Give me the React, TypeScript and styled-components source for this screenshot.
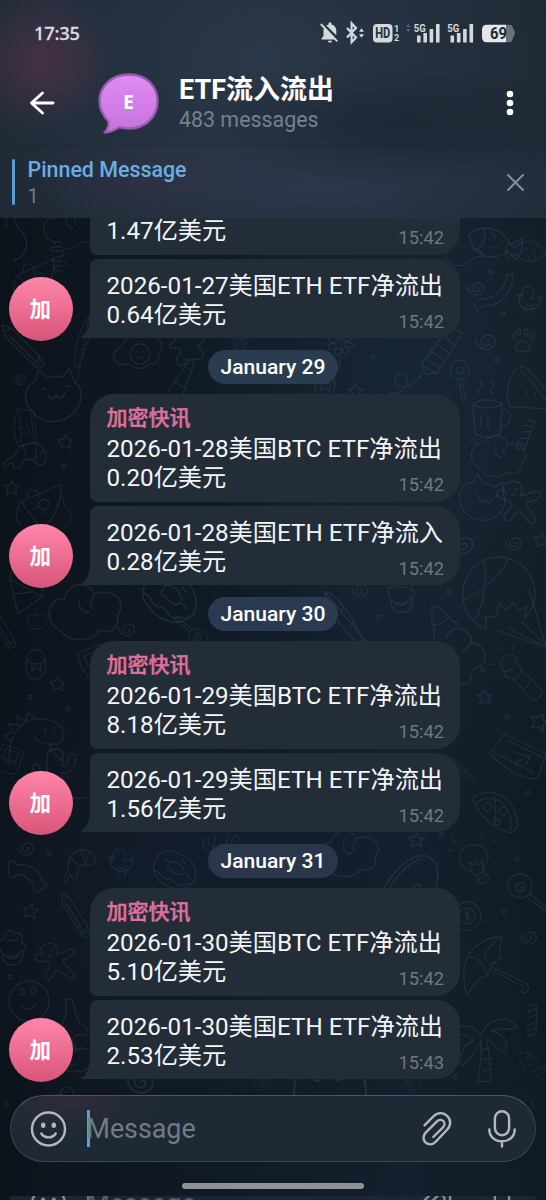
import React from "react";
import styled, { createGlobalStyle, css } from "styled-components";

const GlobalStyle = createGlobalStyle`
  * { box-sizing: border-box; }
  html, body { margin: 0; padding: 0; background: #101924; }
  body { font-family: Roboto, "Noto Sans CJK SC", sans-serif; -webkit-font-smoothing: antialiased; }
`;

const Screen = styled.div`
  position: relative;
  isolation: isolate;
  display: flex;
  flex-direction: column;
  width: 546px;
  height: 1200px;
  overflow: hidden;
  background:
    radial-gradient(ellipse 260px 420px at 440px 400px, rgba(26, 42, 58, 0.6), rgba(26, 42, 58, 0) 100%),
    radial-gradient(ellipse 300px 260px at 200px 900px, rgba(22, 30, 50, 0.6), rgba(22, 30, 50, 0) 100%),
    linear-gradient(90deg, #0d131b 0%, #101a25 40%, #13202d 75%, #101a22 100%);
`;

const Wallpaper = styled.svg`
  position: absolute;
  inset: 0;
  z-index: -1;
  fill: none;
  stroke: rgba(112, 146, 176, 0.14);
  stroke-width: 1.3;
  stroke-linecap: round;
  stroke-linejoin: round;
`;

const Header = styled.header`
  flex: none;
  height: 218px;
  background:
    radial-gradient(ellipse 75px 72px at 42px 60px, rgba(92, 50, 76, 0.62), rgba(92, 50, 76, 0) 100%),
    radial-gradient(ellipse 120px 50px at 150px 178px, rgba(62, 50, 72, 0.35), rgba(62, 50, 72, 0) 100%),
    radial-gradient(ellipse 190px 60px at 400px 125px, rgba(28, 37, 50, 0.8), rgba(28, 37, 50, 0) 100%),
    radial-gradient(ellipse 300px 230px at 260px 60px, rgba(44, 60, 77, 0.75), rgba(44, 60, 77, 0) 100%),
    radial-gradient(ellipse 290px 80px at 330px 190px, rgba(42, 57, 76, 0.75), rgba(42, 57, 76, 0) 100%),
    #202a37;
`;

const StatusBar = styled.div`
  display: flex;
  align-items: center;
  height: 66px;
  padding: 0 30px 0 34px;
`;

const Clock = styled.span`
  flex: 1;
  font: 500 18.3px/24px "Noto Sans", Roboto, sans-serif;
  letter-spacing: -0.2px;
  color: #dedbe3;
  -webkit-text-stroke: 0.3px #dedbe3;
`;

const StatusIcons = styled.svg`
  flex: none;
  display: block;
  fill: #d6d9dc;
`;

const TitleBar = styled.div`
  display: flex;
  align-items: center;
  height: 80px;
  padding: 0 20px 6px 28px;
  border-bottom: 1px solid rgba(20, 28, 38, 0.35);
`;

const BubbleAvatar = styled.svg`
  flex: none;
  margin: 0 19px 0 42px;
`;

const TitleText = styled.div`
  flex: 1;
  padding-top: 3px;
`;

const Title = styled.h1`
  margin: 0;
  font-size: 27px;
  line-height: 30px;
  font-weight: 700;
  color: #fff;
`;

const Subtitle = styled.div`
  margin-top: 2px;
  font-size: 21.4px;
  line-height: 26px;
  color: #75818d;
`;

const Pinned = styled.div`
  display: flex;
  align-items: center;
  height: 72px;
  padding: 0 21px 0 12px;
`;

const PinnedMark = styled.i`
  width: 3px;
  height: 46px;
  border-radius: 2px;
  background: #5a9bd3;
`;

const PinnedText = styled.div`
  flex: 1;
  padding: 2px 0 0 12.5px;
  font-size: 22px;
  line-height: 27px;
  color: #6d7883;
  strong { display: block; font-weight: 500; font-size: 21.4px; color: #69aee3; }
  span { display: block; font-size: 20px; }
`;

const Chat = styled.main`
  flex: none;
  display: flex;
  flex-direction: column;
  justify-content: flex-end;
  height: 864px;
  padding: 0 0 3px 9px;
  overflow: hidden;
`;

const Group = styled.section`
  flex: none;
  display: flex;
  align-items: flex-end;
`;

const Avatar = styled.div`
  flex: none;
  display: flex;
  align-items: center;
  justify-content: center;
  width: 64px;
  height: 64px;
  margin: 0 16.5px -3px 0;
  padding: 0 1.5px 3px 0;
  border-radius: 50%;
  background: linear-gradient(#ff86a9, #d8557a);
  color: #fff;
  font-size: 21.5px;
  font-weight: 700;
`;

const Stack = styled.div`
  display: flex;
  flex-direction: column;
  gap: 3.5px;
  width: 370.5px;
`;

const Bubble = styled.article<{ $last?: boolean }>`
  position: relative;
  height: ${(p) => (p.$last ? "79.5" : "108")}px;
  padding: ${(p) => (p.$last ? "13px" : "9.5px")} 16px 0 17px;
  background: #222d38;
  border-radius: ${(p) => (p.$last ? "7px 24px 24px 0" : "24px 24px 24px 7px")};
`;

const Tail = styled.svg`
  position: absolute;
  left: -8.5px;
  bottom: 0;
  fill: #222d38;
`;

const Sender = styled.div`
  height: 31px;
  font-size: 21px;
  line-height: 29px;
  font-weight: 500;
  color: #e0709b;
  -webkit-text-stroke: 0.4px #e0709b;
`;

const Line = styled.div`
  height: 29px;
  font-size: 24.2px;
  line-height: 29px;
  white-space: nowrap;
  color: #f4f6f8;
`;

const Row = styled.div`
  display: flex;
  justify-content: space-between;
  align-items: flex-start;
`;

const Time = styled.time`
  padding-top: 6px;
  font-size: 18.3px;
  line-height: 29px;
  color: #6d7883;
`;

const DatePill = styled.div<{ $tone?: string }>`
  flex: none;
  align-self: center;
  width: 130px;
  height: 34px;
  margin: 12px 9px 10px 0;
  border-radius: 17px;
  background: ${(p) => p.$tone || "#2a3b4e"};
  color: #fff;
  font-size: 21.1px;
  line-height: 34px;
  font-weight: 500;
  text-align: center;
  white-space: nowrap;
`;

const composerBox = css`
  display: flex;
  align-items: center;
  width: 526px;
  height: 67px;
  padding: 0 16px 0 19px;
`;

const Composer = styled.div`
  ${composerBox}
  flex: none;
  margin: 13px 0 0 10px;
  border-radius: 34px;
  border: 1px solid rgba(120, 135, 150, 0.3);
  border-top-color: rgba(130, 140, 155, 0.45);
  background:
    radial-gradient(ellipse 90px 30px at 60px 6px, rgba(62, 44, 60, 0.5), rgba(62, 44, 60, 0)),
    #1f2935;
`;

const Echo = styled.div`
  flex: none;
  width: 526px;
  height: 4px;
  margin: 7px 0 0 10px;
  overflow: hidden;
  background: #1c2535;
`;

const EchoInner = styled.div`
  ${composerBox}
  margin-top: -26px;
  border: 1px solid transparent;
  opacity: 0.7;
`;

const Caret = styled.i`
  width: 3px;
  height: 37px;
  margin: 0 -3px 0 18.5px;
  background: #5a9fdb;
`;

const Placeholder = styled.div`
  flex: 1;
  font-size: 26.8px;
  line-height: 36px;
  color: #6f7c88;
`;

const Glyph = styled.svg`
  flex: none;
  fill: none;
  stroke: #b2b8be;
  stroke-width: 2.4;
  stroke-linecap: round;
  stroke-linejoin: round;
`;

const BackArrow = styled(Glyph)`
  stroke: #fff;
  stroke-width: 2.9;
`;

const CloseIcon = styled(Glyph)`
  stroke: #82909c;
  stroke-width: 2;
`;

const Mic = styled(Glyph)`
  margin-left: 31.5px;
`;

const HomeBar = styled.div`
  flex: none;
  align-self: center;
  width: 182px;
  height: 6.5px;
  margin-top: 20.5px;
  border-radius: 4px;
  background: #8f9298;
`;

const shapes: Record<string, string> = {
  spiral: "M0 1c2-2 4 1 2 3s-7 0-6-4 9-6 11-1-3 10-8 9-8-6-7-9",
  star: "M0-7l2 5 5 0-4 4 2 5-5-3-5 3 1-5-4-4 5-1z",
  dot: "M-2 0a2 2 0 1 0 4 0a2 2 0 1 0-4 0",
  duck: "M-7-6a6 6 0 1 1 9 4c4 2 8 0 9-2 2 8-3 13-10 13s-12-4-11-9 4-5 4-5zM-7-6l-5 1 4 3M-3 4c1 3 6 3 8 0M-3 9v5M4 9v5M-2-8h.5",
  paw: "M-7 7c-1-5 4-9 8-8s7 6 5 9-5 0-7 1-5 2-6-2zM-9-3a2 3 0 1 1 .1 0M-4-7a2 3 0 1 1 .1 0M3-7a2 3 0 1 1 .1 0M9-3a2 3 0 1 1 .1 0",
  pencil: "M-22-14l6-5L18 9l-6 9L-20-9zM-22-14l-3-7 9 2M12 18c5 3 12-5 6-9M8 14c4 1 8-5 6-8M-17-11L11 12",
  egg: "M-22 8c-8-8 3-12 7-19s14-9 21-7 14-1 17 7-3 10-3 16-8 4-12 7-8 4-14 0-11 1-16-4zM-8 0a10 10 0 1 1 20 0a10 10 0 1 1-20 0M-2 2c2 4 6 3 7 0M-1-3v1M5-3v1",
  cat: "M-18 16c-10-10-8-23 2-27l2-9 8 6c5-1 9-1 12 0l6-7 4 10c9 8 7 20-2 28s-24 8-32-1zM-6 0c2 6 6 4 7 1 2 3 6 3 7-2M-11-5l3 1M10-6l3-1",
  splat: "M-14-8c-6-8 5-12 8-5s7-6 14-2 1 9-2 11 9 6 3 11-9-2-12 3-11 5-11-1 5-5 4-9-9 0-10-3 3-5 6-5z",
  flower: "M-5 0a5 5 0 1 1 10 0a5 5 0 1 1-10 0M-4-5c-6-9 4-13 4-1 2-12 10-8 4 0 9-8 12 1 2 4 12 1 9 9 0 4 6 8-2 13-4 3-3 11-11 6-5-1-9 5-13-3-3-5-11-4-6-12 2-5M0 14c1 9-3 14-8 20",
  rocket: "M-17 15l24-33c5-4 13-3 17 2L-1 23zM-13 9l14 8M-7 1l14 10M-1-6l13 10M6-14l12 11M-17 15l4 9 12-1M-16 24c-9 14-26 17-27 7s13-10 12 0-10 14-18 12",
  ribbon: "M-18 14c2-5 6-6 9-5C0 9 13 2 15-15l6-1C21 3 8 15-5 16c-4-1-7 2-10 5z",
  fish: "M-22-2C-14-14 6-16 17-1l9-8c3 8 2 18-2 20l-8-6C3 20-16 14-22-2zM-10-10c4 6 3 14-1 19M-16-3h1M-2-8l5 4M0 5l6-2",
  mug: "M-15-12c7-6 22-5 29 0l-2 30c-7 5-19 4-25-1zM-15-12c7 5 22 5 29 0M14-6c11-3 12 16-1 16M-8-22c-6-6 6-6 0-14M4-22c-6-6 6-6 0-14M-7 0v11M0 1v13",
  melon: "M-22 20c-6-15-1-37 11-42C0-19 14 3 25 16c-14 10-30 0-47 4zM-11-17C-3-12 7 5 16 15M-14-5l4 3M-7 2l3 5M2 5l1 4",
  pizza: "M-20-17C-3-31 27-18 25 12l-5 6C7 15-10 8-20-17zM-17-11C-3-24 21-15 19 15M-5-4a4 4 0 1 1 .1 0M11 0a4 4 0 1 1 .1 0M5 10a3 3 0 1 1 .1 0M3-18v25",
  slice: "M-19-3L20-21c4 14-5 34-18 45zM-12-6a6 6 0 1 1 10 0M4 4a5 5 0 1 1 .1 0M-7 5c3-6 10-3 10 3M-19-3c-6 9-6 19 0 23",
  cloud: "M-22 17c-15-6-11-28 3-26C-15-25 3-24 6-13c14-7 29 6 19 18 3 8-5 16-15 12-5 10-25 11-32 0zM-6-9c-2 6 2 11 8 11M6-11c-4 3-4 7-1 10",
  acorn: "M-9-6c2-11 16-11 18 0 3 10-1 20-9 21s-12-9-9-21zM-9-4c5 5 14 5 18 0M-4-1v8l4-4 5 4V0",
  apple: "M0-5c-6-7-15 0-12 9 3 9 9 10 13 7 5 3 11-2 12-9 1-9-8-12-13-7zM0-5c-1-5-3-8-5-10M-5 7h4",
  gameboy: "M-16-8l25-11c5 0 7 5 8 10L26 9c-2 8-20 15-26 13-7-6-15-19-16-30zM-9-5L8-13l6 12-17 8zM4 11a3 3 0 1 1 .1 0M14 6a3 3 0 1 1 .1 0",
  dino: "M-30 26c-4-22 9-44 28-44 14-1 27 7 26 17-1 9-9 9-14 8 0 10 7 12 14 17M-29 4l-7-5 9-4-5-8 10 1-1-9 9 5 2-9 7 6M5-8v4M14-9v4M-6 0c4 5 11 8 18 7",
  balloon: "M-36 0a36 36 0 1 1 61 26l3-13-8 5-5-9-8 8-7-6-3 12-10 1 0 12A36 36 0 0 1-36 0zM-24 27C-15 14-12-15-15-33M-36 7C-12-4 4-20 9-34M-4 37l51 17L30-4M9 35l38 19M22 28l26 25",
  flash: "M-20-12c-2-8 7-13 12-10l8 12L23 9c2 6-4 11-9 10L-7 1l-8-2zM-19-7c7 3 13-3 13-13M-7 1c4-1 8-6 7-11M5 9c4-2 5-5 5-8M-23-26l-4-4M-10-28v-5M-28-12l-6 1",
  tree: "M-30-40c9 0 15 9 20 15 5 1 8 3 6 7 11 3 16 10 13 15 12 1 17 12 13 20l-12 7c1 7-4 17-10 14s-7-12-10-18M-30-40v18c6 2 12-2 16-6M-5-17c-6 0-9 4-11 9M9-2L0 6M-28-20v13",
  shrimp: "M-18 18c-1-10 7-10 5-17-1-11 10-21 20-17 9 2 12 12 7 16-5 2-8-3-15 2-4 3 2 7-3 12s-5-5-8-1-3 9-6 5zM1-16l5 13M10-14l-4 12M-10-8l9 9",
  donut: "M-21-6c1-14 16-17 26-11 13 5 19 17 14 27-7 11-23 9-31 2S-22 4-21-6zM-7-5c1-8 11-4 15 2s-2 9-8 5-8-3-7-7zM-20 0c7 1 6 9 13 8s8 9 14 6 10 2 14-6M-10-12l3 2M8-10l3 3M11 3l3 3",
  bone: "M-16-8c-4-8 5-11 7-4 13-2 25 5 26 16 7 1 5 9-1 7-1 7-9 5-7-2-4-8-9-11-17-12-3 6-10 3-8-5z",
  cupcake: "M-13 2c-4-8 2-10 5-10 0-8 7-12 9-6 8-2 10 6 7 9 7 3 4 9 0 9-4 8-19 7-21-2zM-11 7c1 9 5 12 12 11s9-4 9-14M-6 10c5 3 9 1 12-2M-5-8c3 3 8 2 10 0",
  ginger: "M-13-16c9-5 16 2 12 10 8-1 11-7 16-6s3 7-9 11c0 7 13 11 11 17-5 5-13-8-17-7S-4 21-11 18c-4-4 6-11 4-15C-9-2-22 3-22-4s9-1 9-1c-6-4-5-8 0-11zM-12-9h1M-6-11h1M-10-5c2 1 4 0 4-2",
  face: "M-20 0a20 20 0 1 1 40 0a20 20 0 1 1-40 0M-9-9c0-4 4-4 4 0s-4 4-4 0zM2-10c0-4 5-4 5 0s-5 5-5 0zM-7 5c5 5 12 3 14-3",
  cactus: "M-9 27V-22c3-7 14-7 16 0l-1 12c5 1 7-2 6-8 2-6 8-4 8 0-1 12-6 15-14 15v9C6 19 14 24 30 22M-9 4c-11 1-14-3-14-12 1-6 7-4 7 0s2 6 7 5",
  hourglass: "M-22-8L-8-28 34-8 25 17c-15 0-30-8-47-25zM-18-10l39 21M-5-22l39 19M2-10c9 3 10 4 16 4-2 7-4 8-9 10M4 4c0-5 2-6 6-6",
  bulb: "M-9 8c-11-9-4-26 9-24 15 1 17 15 10 20-1 5 2 8 5 12-1 6-9 9-11 4 0-6-6-9-13-12zM-5 1l3 10M-5 1l5 3 2-5 3 5 4-4-1 11M3 14l8-4M5 18l8-4M-22-10l-4-1M-18-19l-3-3M8-23v-4M18-18l3-3",
  lolly: "M-12 0a12 12 0 1 1 24 0a12 12 0 1 1-24 0M9 7l22 18M6 10l23 18M0 1c2-2 3 1 1 3s-6 0-5-4 8-5 9-1-2 8-6 7",
  whale: "M-26 26C-18 8-2-13 14-12c15 4 12 25 5 34M-22 25C-13 10 0-9 12-9M8 18a3 3 0 1 1 .1 0",
  coin: "M-14 0a14 14 0 1 1 28 0a14 14 0 1 1-28 0M-8 0a8 8 0 1 1 16 0a8 8 0 1 1-16 0M2-3c-5-2-5 3-1 3s3 5-2 3M0-5V5",
  umbrella: "M-22 29c-10-35 4-56 35-60-1 8-4 13-1 22-6 3-11 9-13 17-11 3-15 10-21 21zM-20-10c9 0 14 6 19 18M13-31C4-25-3-18-5-8M12-9l-12 7M3 0l35 17c6 8-6 12-6 5M2 3l33 17",
  palm: "M-2-5c-10-13-26-11-31 0 10-3 17-1 24 6-8 2-17 13-12 25 8-6 14-15 19-26 0 16 0 30-4 42l14-1c0-15-2-28-4-42 6 4 10 11 18 14 5-11-3-20-14-22 11-4 20-1 26-3C25-27 5-22-2-5zM-1 10l8-2M0 20l9-2M0 31l9-2",
  candy: "M-4-14l9-2-1 30-8 2 0-8M-4-9l8-2M-4-2l8-3M-4 5l8-3M-4 11l8-3",
  banana: "M-12 22C-12 3 1-7-5-22l7-1c5 15 3 24 16 30l-2 7c-9-4-13 0-15 10l-5-3-8 1",
  cone: "M-15-11L17 7-7 24zM-15-11c0-10 8-15 15-8 10-4 20 8 17 26M-10 4l17-2",
  bottle: "M-18 13L3-17l1-8 8 3-2 8L-4 22zM-8-3l12 8M-18 13l14 9M3-17l7 3",
  bolt: "M-8 20c14-3 15-20 9-27s-9-10-8-18M-6-25c-9 0-12 6-9 13",
  feather: "M-21-29c15 4 33 32 41 55-15-5-34-31-41-55zM-21-29L31 33M-5-5l3-7M5 7l4-7",
  worm: "M-6-22c9-2 10 5 2 5s-8 6 1 4 9 5 1 6-8 5 1 4 8 6 0 5-5 6 2 5",
};

type Doodle = [string, number, number, number?, number?];

const doodles: Doodle[] = [
  ["bolt", 22, 240], ["cloud", 72, 226, 0, 0.9], ["worm", 60, 264], ["slice", 35, 278, 0, 0.9], ["pencil", 25, 348, 5], ["feather", 82, 343, 50, 0.8],
  ["egg", 138, 354], ["splat", 192, 350, 0, 1.1], ["spiral", 20, 378, 0, 0.8], ["cat", 55, 394, 0, 1.2], ["bottle", 182, 384], ["flower", 240, 345, 0, 0.7],
  ["fish", 492, 242, 12, 1.1], ["fish", 528, 252, 180, 0.8], ["bolt", 462, 262, 90, 0.8], ["spiral", 476, 287], ["ribbon", 492, 290], ["duck", 529, 300], ["paw", 523, 342],
  ["spiral", 486, 340, 0, 1.2], ["flower", 340, 344], ["rocket", 438, 350], ["lolly", 460, 370, 40, 0.8], ["melon", 532, 388], ["mug", 488, 416], ["star", 356, 391], ["acorn", 325, 384],
  ["dot", 373, 357], ["dot", 497, 360], ["dot", 503, 314], ["dot", 491, 272],
  ["candy", 525, 435, 20], ["cloud", 500, 455, 10, 0.9], ["spiral", 476, 438, 0, 0.7], ["hourglass", 20, 425, 60, 0.7], ["star", 66, 442], ["shrimp", 28, 458, 30], ["dot", 64, 466],
  ["cat", 484, 498, 20], ["ginger", 520, 502, 10, 1.1], ["spiral", 514, 542], ["spiral", 463, 543, 0, 1.3], ["star", 542, 540], ["balloon", 499, 593], ["spiral", 360, 589], ["cupcake", 402, 594], ["feather", 345, 620],
  ["tree", 462, 646], ["flash", 520, 679, 6], ["star", 485, 697], ["dot", 449, 592], ["dot", 379, 617], ["dot", 483, 669], ["dot", 507, 717], ["star", 540, 722, 20, 1.2],
  ["star", 12, 488], ["slice", 40, 505], ["bolt", 68, 515, 0, 0.7], ["cone", 25, 590], ["cloud", 87, 610, 0, 1.2], ["apple", 37, 620, 0, 0.75], ["donut", 170, 598, 10, 1.3], ["spiral", 127, 628], ["pencil", 4, 630, 20, 0.8],
  ["gameboy", 92, 661, 0, 0.9], ["acorn", 36, 664], ["star", 58, 684], ["dot", 30, 697], ["dot", 68, 709], ["dino", 40, 737], ["lolly", 198, 638, 180, 0.8],
  ["cactus", 56, 776], ["gameboy", 8, 756, 40, 0.7], ["spiral", 26, 847], ["dot", 49, 853], ["shrimp", 80, 865, 0, 0.9], ["duck", 121, 862], ["donut", 175, 871], ["bone", 25, 877], ["pencil", 77, 917, 18, 0.9], ["star", 31, 911, 10],
  ["cupcake", 13, 947], ["ginger", 57, 961], ["face", 29, 1001], ["dot", 10, 977], ["cactus", 220, 850, 12, 0.8],
  ["hourglass", 512, 762], ["pizza", 492, 815], ["feather", 462, 770, -10, 0.5], ["bulb", 474, 861], ["lolly", 520, 886], ["cloud", 350, 852], ["whale", 408, 870, 0, 1.2], ["coin", 467, 916], ["spiral", 529, 936], ["umbrella", 489, 967],
  ["star", 417, 840], ["dot", 441, 835], ["dot", 517, 859], ["dot", 504, 911], ["dot", 528, 793],
  ["palm", 483, 1040], ["candy", 532, 1020], ["fish", 530, 1062, 40, 0.6], ["dot", 455, 1077], ["face", 330, 1092, 0, 1.8], ["whale", 528, 1100, 90, 0.5], ["banana", 70, 1022], ["apple", 76, 1057, 0, 1.2], ["spiral", 141, 1080, 0, 1.6], ["coin", 262, 1082, 0, 0.6], ["duck", 68, 1100], ["dot", 6, 1104], ["splat", 415, 1084, 0, 0.5],
];

function Doodles() {
  return (
    <Wallpaper width="546" height="1200" aria-hidden>
      {doodles.map(([kind, x, y, r = 0, s = 1], i) => (
        <path key={i} d={shapes[kind]} transform={`translate(${x} ${y}) rotate(${r}) scale(${s})`} />
      ))}
    </Wallpaper>
  );
}

const SignalBars = ({ x }: { x: number }) => (
  <g transform={`translate(${x} 0)`}>
    <rect x="3" y="19.500" width="3.600" height="7" rx=".6" />
    <rect x="9.400" y="17" width="3.600" height="9.500" rx=".6" />
    <rect x="15.600" y="13" width="3.600" height="13.500" rx=".6" />
    <rect x="22" y="8" width="3.600" height="18.500" rx=".6" />
    <text x="-.3" y="15.500" fontSize="10.500" fontWeight="700" fontFamily="Roboto" textLength="12" lengthAdjust="spacingAndGlyphs">5G</text>
  </g>
);

function Indicators() {
  return (
    <StatusIcons width="196" height="34" viewBox="0 0 196 34">
      <path d="M1.500 23.500v-1.300l2-2v-5.700c0-1 .3-2 .8-2.900l11.500 11.900zM6.300 9.600c.7-.5 1.500-.8 2.200-1V7.800a1.500 1.500 0 0 1 3 0v.8c3 .7 4.800 3.200 4.800 6v4.700zM8 24.800h4a2 2 0 0 1-4 0z" />
      <path d="M.8 8l16.500 17.300" stroke="#d6d9dc" strokeWidth="1.900" />
      <path d="M27 12l9 9.500-4.400 4.700V7.300L36 12l-9 9.500" fill="none" stroke="#d6d9dc" strokeWidth="2.200" />
      <path d="M39 15.700l2.500-3.500 2.500 3.500zM39 18.200h5l-2.500 3.500z" />
      <rect x="53" y="8" width="19.500" height="18.500" rx="4" />
      <text x="62.700" y="22.400" textAnchor="middle" fontSize="14" fontWeight="800" fontFamily="Roboto" fill="#26323f" textLength="15" lengthAdjust="spacingAndGlyphs">HD</text>
      <text x="74" y="16" fontSize="9" fontWeight="700" fontFamily="Roboto">1</text>
      <text x="74" y="25" fontSize="9" fontWeight="700" fontFamily="Roboto">2</text>
      <path d="M86 11l2.300-3 2.300 3zM86 13h4.600l-2.300 3z" fill="#56616d" />
      <SignalBars x={94} />
      <SignalBars x={127.500} />
      <path d="M186 8.800h4q3 .6 3 4l1.700 2.200v4l-1.700 2.200q0 4-3 5h-4z" fill="#69737e" />
      <path d="M167 8.800h19v17.500h-19q-5 0-5-5v-7.500q0-5 5-5z" fill="#e4e6e8" />
      <text x="178.500" y="23.400" textAnchor="middle" fontSize="16.500" fontWeight="700" fontFamily="Roboto" fill="#202a34" textLength="17" lengthAdjust="spacingAndGlyphs">69</text>
    </StatusIcons>
  );
}

function ComposerContent() {
  return (
    <>
      <Glyph width="38" height="38" viewBox="0 0 38 38">
        <circle cx="18.500" cy="19" r="16.500" />
        <path d="M11.300 23.500c3.200 5.200 11.200 5.200 14.400 0" />
        <g fill="#b2b8be" stroke="none">
          <ellipse cx="13.200" cy="15.300" rx="2.200" ry="2.700" />
          <ellipse cx="23.800" cy="15.300" rx="2.200" ry="2.700" />
        </g>
      </Glyph>
      <Caret />
      <Placeholder>Message</Placeholder>
      <Glyph width="34" height="38" viewBox="0 0 34 38">
        <path d="M4.500 15.300l8.800-8.800c4.500-4.500 10.200-4.300 14-.5s4 9.500-.5 14L15.500 32c-3.300 3.300-7.400 3-10 .4s-2.900-6.700.4-10L17 11.300c2-2 4.800-1.800 6.300-.3s1.700 4.300-.3 6.300L13.300 27" />
      </Glyph>
      <Mic width="34" height="40" viewBox="0 0 34 40">
        <rect x="9.900" y="2.200" width="14.200" height="24" rx="7.100" />
        <path d="M4.300 20.500c0 7.200 5.600 11.800 12.700 11.800s12.700-4.600 12.700-11.800M17 32.300v5.200" />
      </Mic>
    </>
  );
}

type MessageProps = { sender?: string; text: string; amount: string; time: string };

function Message({ sender, text, amount, time }: MessageProps) {
  return (
    <Bubble $last={!sender}>
      {sender && <Sender>{sender}</Sender>}
      <Line>{text}</Line>
      <Row>
        <Line>{amount}</Line>
        <Time>{time}</Time>
      </Row>
      {!sender && (
        <Tail width="9" height="18" viewBox="0 0 9 18">
          <path d="M9 0v18H0.800q-1-.3 0-1.200Q8.500 11 8.500 0z" />
        </Tail>
      )}
    </Bubble>
  );
}

const days = [
  { date: "", sender: "\u00a0", d: "2026-01-27", btc: "1.47", eth: "0.64", dir: "出", time: "15:42", tone: "" },
  { date: "January 29", sender: "加密快讯", d: "2026-01-28", btc: "0.20", eth: "0.28", dir: "入", time: "15:42", tone: "#2a3c4f" },
  { date: "January 30", sender: "加密快讯", d: "2026-01-29", btc: "8.18", eth: "1.56", dir: "出", time: "15:42", tone: "#2a3a50" },
  { date: "January 31", sender: "加密快讯", d: "2026-01-30", btc: "5.10", eth: "2.53", dir: "出", time: "15:43", tone: "#2a374b" },
];

export default function App() {
  return (
    <>
      <GlobalStyle />
      <Screen>
        <Doodles />
        <Header>
          <StatusBar>
            <Clock>17:35</Clock>
            <Indicators />
          </StatusBar>
          <TitleBar>
            <BackArrow width="28" height="28" viewBox="0 0 28 28">
              <path d="M14.500 4L3.500 14l11 10M3.500 14H25" />
            </BackArrow>
            <BubbleAvatar width="62" height="62" viewBox="0 0 62 62">
              <defs>
                <linearGradient id="violet" x1="0" y1="0" x2="0" y2="1">
                  <stop offset="0" stopColor="#e18bf3" />
                  <stop offset="1" stopColor="#c473db" />
                </linearGradient>
              </defs>
              <path
                d="M31 2.500C48 2.500 59.500 14 59.500 29S48 56.500 31 56.500c-3.500 0-6.500-.5-9.500-1.400C17 58 12 60.500 6.500 60.500c3.300-3.300 4.500-7 4-11C5 43.500 1.500 37 1.500 29 1.500 14 14 2.500 31 2.500z"
                fill="url(#violet)"
                stroke="#9a5bb0"
                strokeWidth="2.300"
                strokeLinejoin="round"
              />
              <text x="30.500" y="37" textAnchor="middle" fontSize="19.500" fontWeight="700" fontFamily="Open Sans" fill="#fff">E</text>
            </BubbleAvatar>
            <TitleText>
              <Title>ETF流入流出</Title>
              <Subtitle>483 messages</Subtitle>
            </TitleText>
            <svg width="32" height="28" viewBox="0 0 32 28" fill="#fff">
              <circle cx="16" cy="5" r="3.300" />
              <circle cx="16" cy="14" r="3.300" />
              <circle cx="16" cy="23" r="3.300" />
            </svg>
          </TitleBar>
          <Pinned>
            <PinnedMark />
            <PinnedText>
              <strong>Pinned Message</strong>
              <span>1</span>
            </PinnedText>
            <CloseIcon width="19" height="19" viewBox="0 0 19 19">
              <path d="M2 2l15 15M17 2L2 17" />
            </CloseIcon>
          </Pinned>
        </Header>
        <Chat>
          {days.map((day) => (
            <React.Fragment key={day.d}>
              {day.date && <DatePill $tone={day.tone}>{day.date}</DatePill>}
              <Group>
                <Avatar>加</Avatar>
                <Stack>
                  <Message sender={day.sender} text={`${day.d}美国BTC ETF净流出`} amount={`${day.btc}亿美元`} time="15:42" />
                  <Message text={`${day.d}美国ETH ETF净流${day.dir}`} amount={`${day.eth}亿美元`} time={day.time} />
                </Stack>
              </Group>
            </React.Fragment>
          ))}
        </Chat>
        <Composer>
          <ComposerContent />
        </Composer>
        <HomeBar />
        <Echo>
          <EchoInner aria-hidden>
            <ComposerContent />
          </EchoInner>
        </Echo>
      </Screen>
    </>
  );
}
